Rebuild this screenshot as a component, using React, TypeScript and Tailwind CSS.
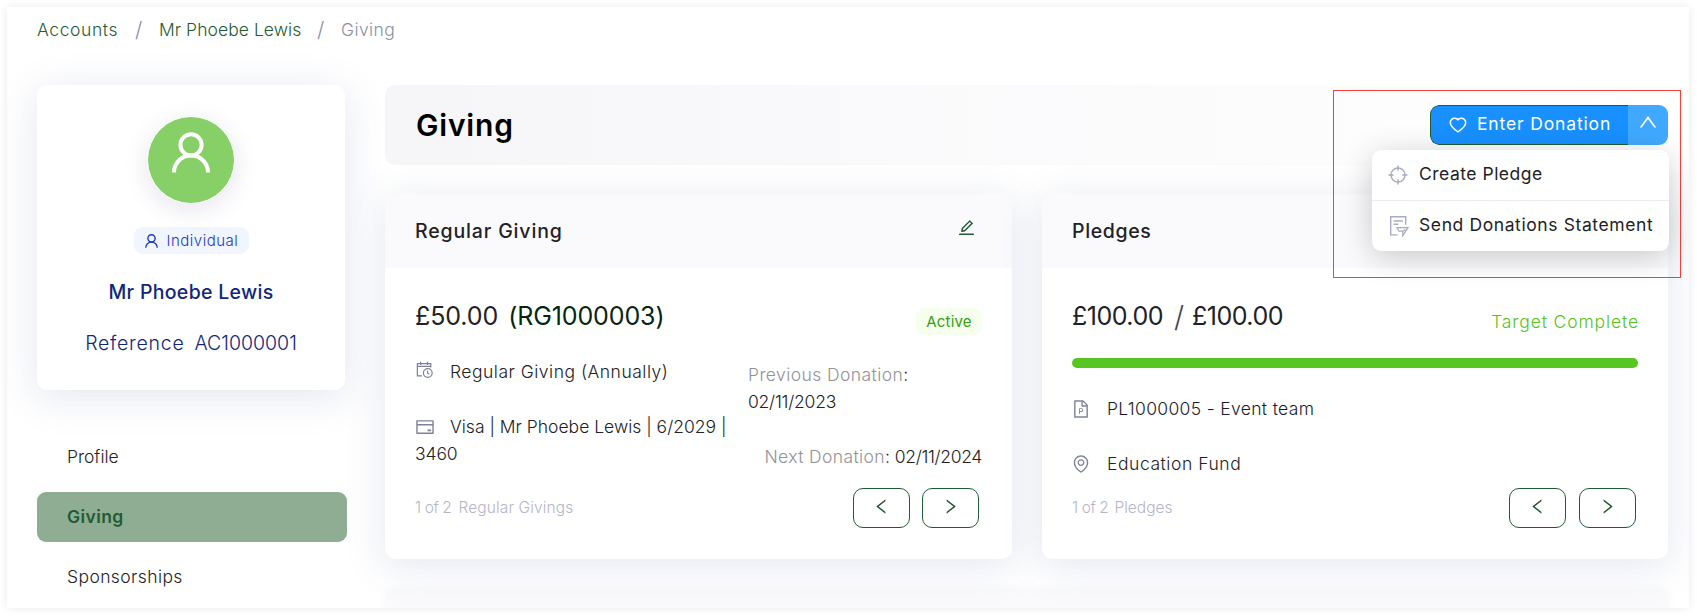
import React from "react";
import {
  AiOutlineCreditCard,
  AiOutlineEdit,
  AiOutlineEnvironment,
  AiOutlineFilePpt,
  AiOutlineHeart,
  AiOutlineLeft,
  AiOutlineRight,
  AiOutlineUp,
} from "react-icons/ai";

function UserIcon({ className }: { className?: string }) {
  return (
    <svg viewBox="0 0 38 41" fill="none" stroke="currentColor" className={className}>
      <circle cx="19" cy="12.8" r="10.6" strokeWidth="4" />
      <path d="M2 40.5C2 31 9.5 23.6 19 23.6S36 31 36 40.5" strokeWidth="4" />
    </svg>
  );
}

function AimIcon({ className }: { className?: string }) {
  return (
    <svg viewBox="0 0 20 20" fill="none" stroke="currentColor" strokeWidth="1.4" className={className}>
      <circle cx="10" cy="10" r="7" />
      <path d="M10 .5v5.2M10 14.3v5.2M.5 10h5.2M14.3 10h5.2" />
    </svg>
  );
}

function ScheduleIcon({ className }: { className?: string }) {
  return (
    <svg viewBox="0 0 16 16" fill="none" stroke="currentColor" className={className}>
      <path d="M5.6 13.9H1.3V2.5h12.6v3.7M1.3 5h12.6M4.4 .6v3.2M10.8 .6v3.2" strokeWidth="1.15" />
      <circle cx="11.1" cy="11.3" r="4.1" strokeWidth="1.15" />
      <path d="M10.9 9v2.5l1.6.9" strokeWidth="1.05" />
    </svg>
  );
}

function StatementIcon({ className }: { className?: string }) {
  return (
    <svg viewBox="0 0 20 22" fill="none" stroke="currentColor" strokeWidth="1.4" className={className}>
      <path d="M8.6 19.9H1.7V1.7h15v8M4.6 6h9.2M4.6 9.2h4.8" />
      <path d="M8 12.6h11l-5.2 8v-4.4H10zM13.8 16.2l2.6-1.6" strokeWidth="1.25" />
    </svg>
  );
}

function Pager({ gap }: { gap: string }) {
  const button =
    "flex h-10 w-[57px] items-center justify-center rounded-[10px] border border-[#1f5c33] bg-white text-[#1f5c33]";
  return (
    <div className={"flex " + gap}>
      <button className={button}>
        <AiOutlineLeft className="relative -top-px h-[19px] w-[19px]" />
      </button>
      <button className={button}>
        <AiOutlineRight className="relative -top-px h-[19px] w-[19px]" />
      </button>
    </div>
  );
}

const cardShadow = "shadow-[0_7px_40px_rgba(70,85,150,0.15)]";

export default function App() {
  return (
    <div className="h-[616px] w-[1697px] overflow-hidden bg-white p-[7px] pb-2 font-['Inter',sans-serif] text-[17.5px] font-light text-[#222226]">
      <div className="h-[601px] w-[1682px] shadow-[0_0_9px_rgba(0,0,0,0.09)]">
        <div className="h-full w-full overflow-hidden bg-white">
          <nav className="flex h-[78px] items-start pl-[30px] pt-[9px] leading-[27px] text-[#1f5c33]">
            <span className="w-[98px] tracking-[0.6px]">Accounts</span>
            <span className="w-6 text-[21px] text-[#8d8ea6]">/</span>
            <span className="w-[158px] tracking-[0.05px]">Mr Phoebe Lewis</span>
            <span className="w-6 text-[21px] text-[#8d8ea6]">/</span>
            <span className="tracking-[0.4px] text-[#8d8ea6]">Giving</span>
          </nav>

          <div className="flex pl-[30px]">
            <aside className="w-[310px] shrink-0">
              <section
                className={"flex h-[305px] w-[308px] flex-col items-center rounded-[10px] bg-white pt-[31px] " + cardShadow}
              >
                <div className="flex h-[88px] w-[88px] items-start justify-center rounded-full border border-white bg-[#87d068] pt-[15px] text-white shadow-[0_6px_24px_rgba(80,80,140,0.14)]">
                  <UserIcon className="h-[41px] w-[38px]" />
                </div>
                <div className="mt-[23px] flex h-[27px] w-[115px] items-center rounded-[9px] bg-[#f0f5ff] pl-[11px] text-[15px] text-[#1d39c4]">
                  <UserIcon className="mr-[9px] h-[14px] w-[13px]" />
                  <span className="relative top-[0.5px] tracking-[0.5px]">Individual</span>
                </div>
                <h2 className="mt-[24px] text-[19.5px] font-medium leading-[28px] tracking-[0.3px] text-[#10277c]">
                  Mr Phoebe Lewis
                </h2>
                <p className="mt-[23px] flex gap-[10px] text-[19.5px] leading-[28px] text-[#10277c]">
                  <span className="tracking-[0.75px]">Reference</span>
                  <span>AC1000001</span>
                </p>
              </section>
              <ul className="mt-[42px]">
                <li className="flex h-[50px] items-center pl-[30px]">Profile</li>
                <li className="mt-[10px] flex h-[50px] items-center rounded-[9px] bg-[#8fad92] pl-[30px] font-semibold tracking-[0.4px] text-[#1f5c33]">
                  Giving
                </li>
                <li className="mt-[10px] flex h-[50px] items-center pl-[30px] tracking-[0.4px]">Sponsorships</li>
              </ul>
            </aside>

            <main className="relative ml-[38px] w-[1283px] shrink-0">
              <header className="flex h-20 items-center justify-between rounded-[10px] bg-gradient-to-r from-[#f6f6f9] to-white pl-[31px]">
                <h1 className="text-[30px] font-semibold tracking-[0.8px] text-black">Giving</h1>
                <div className="flex h-10 overflow-hidden rounded-[9px] font-medium text-white">
                  <button className="flex w-[198px] items-center rounded-l-[9px] border border-r-0 border-[#1f5c33] bg-[#1890ff] pl-[17px] pb-px">
                    <AiOutlineHeart className="mr-[9px] h-5 w-5" />
                    <span className="font-normal tracking-[0.85px]">Enter Donation</span>
                  </button>
                  <button className="flex w-10 items-center justify-center bg-[#40a9ff]">
                    <AiOutlineUp className="relative -top-[3px] h-[22px] w-[22px]" />
                  </button>
                </div>
              </header>

              <div className="mt-[29px] flex gap-[30px]">
                <section className={"h-[365px] w-[627px] rounded-[10px] bg-white " + cardShadow}>
                  <div className="flex h-[74px] items-center justify-between rounded-t-[10px] bg-[#fafafc] pl-[30px] pr-[36px]">
                    <h3 className="relative top-px text-[19.5px] font-medium tracking-[0.85px]">Regular Giving</h3>
                    <AiOutlineEdit className="relative -top-1 h-[19px] w-[19px] text-[#1f5c33]" />
                  </div>
                  <div className="flex h-[291px] flex-col px-[31px] pl-[30px] pt-[31px]">
                    <div className="flex h-[35px] items-start justify-between">
                      <p className="flex gap-[10px] text-[25px] font-normal leading-[35px]">
                        <span className="tracking-[-0.1px]">£50.00</span>
                        <span className="tracking-[-0.1px] text-[#06260f]">(RG1000003)</span>
                      </p>
                      <span className="mt-[9px] -mr-px flex h-[27px] w-[66px] shrink-0 items-center justify-center rounded-[9px] bg-[#f6ffed] pt-px text-[15px] font-normal tracking-[0.2px] text-[#389e0d]">
                        Active
                      </span>
                    </div>
                    <div className="flex h-[123px] justify-between leading-[27px]">
                      <div className="w-[330px] pt-[23.5px]">
                        <p className="tracking-[0.5px]">
                          <ScheduleIcon className="ml-px mr-[17px] inline-block h-[17px] w-[17px] -translate-y-[3px] text-[#7e8299]" />
                          Regular Giving (Annually)
                        </p>
                        <p className="mt-[28px]">
                          <AiOutlineCreditCard className="mr-[15px] inline-block h-[20px] w-[20px] -translate-y-px text-[#7e8299]" />
                          Visa | Mr Phoebe Lewis | 6/2029 | <span className="tracking-[-0.1px]">3460</span>
                        </p>
                      </div>
                      <div className="w-[233px] pt-[27px]">
                        <p className="tracking-[0.42px]">
                          <span className="text-[#929298]">Previous Donation</span>:
                        </p>
                        <p className="tracking-[-0.24px]">02/11/2023</p>
                        <p className="-mr-px mt-[28px] text-right">
                          <span className="tracking-[0.38px] text-[#929298]">Next Donation</span>:{" "}
                          <span className="tracking-[-0.34px]">02/11/2024</span>
                        </p>
                      </div>
                    </div>
                    <div className="mt-[30px] flex items-center justify-between pr-[2px] pt-[0.5px]">
                      <p className="flex gap-[7px] text-[15.5px] text-[#b5b5c9]">
                        <span className="tracking-[-0.4px]">1 of 2</span>
                        <span className="tracking-[0.12px]">Regular Givings</span>
                      </p>
                      <Pager gap="gap-[12px]" />
                    </div>
                  </div>
                </section>

                <section className={"h-[365px] w-[626px] rounded-[10px] bg-white " + cardShadow}>
                  <div className="flex h-[74px] items-center rounded-t-[10px] bg-[#fafafc] pl-[30px]">
                    <h3 className="relative top-px text-[19.5px] font-medium tracking-[0.65px]">Pledges</h3>
                  </div>
                  <div className="flex h-[291px] flex-col px-[30px] pt-[31px]">
                    <div className="flex h-[35px] items-start justify-between">
                      <p className="flex text-[25px] font-normal leading-[35px]">
                        <span className="w-[102px] tracking-[-0.5px]">£100.00</span>
                        <span className="w-[18px] text-[29px] font-light text-[#3f4254]">/</span>
                        <span className="tracking-[-0.5px]">£100.00</span>
                      </p>
                      <span className="mt-[9px] -mr-px leading-[27px] tracking-[0.88px] text-[#52c41a]">
                        Target Complete
                      </span>
                    </div>
                    <div className="mt-[24px] h-[10px] w-[566px] rounded-full bg-[#57c522]" />
                    <p className="mt-[27px] flex h-[28px] items-center text-[#181c32]">
                      <AiOutlineFilePpt className="-ml-px mr-[16px] h-[20px] w-[20px] text-[#7e8299]" />
                      <span className="tracking-[0.34px]">PL1000005 - Event team</span>
                    </p>
                    <p className="mt-[27px] flex h-[28px] items-center">
                      <AiOutlineEnvironment className="-ml-px mr-[16px] h-[20px] w-[20px] text-[#7e8299]" />
                      <span className="tracking-[0.55px]">Education Fund</span>
                    </p>
                    <div className="mt-[9px] flex items-center justify-between pr-[2px] pt-[0.5px]">
                      <p className="flex gap-[6px] text-[15.5px] text-[#b5b5c9]">
                        <span className="tracking-[-0.4px]">1 of 2</span>
                        <span>Pledges</span>
                      </p>
                      <Pager gap="gap-[13px]" />
                    </div>
                  </div>
                </section>
              </div>

              <section className="mt-[30px] h-20 rounded-[10px] bg-[#fafafc] shadow-[0_0_8px_rgba(70,85,150,0.05)]" />

              <div className="absolute left-[948px] top-[5px] h-[188px] w-[348px] border border-[#f5413d]" />
              <ul className="absolute left-[987px] top-[65px] w-[297px] rounded-[9px] bg-white font-normal shadow-[0_6px_32px_rgba(0,0,0,0.2)]">
                <li className="flex h-[51px] items-center border-b border-[#ececef] pb-px pl-[16px]">
                  <AimIcon className="mr-[11px] h-5 w-5 text-[#a9abc3]" />
                  <span className="tracking-[0.5px]">Create Pledge</span>
                </li>
                <li className="flex h-[50px] items-center pl-[17px]">
                  <StatementIcon className="mr-[10px] h-[22px] w-5 text-[#a9abc3]" />
                  <span className="relative -top-px tracking-[0.6px]">Send Donations Statement</span>
                </li>
              </ul>
            </main>
          </div>
        </div>
      </div>
    </div>
  );
}
